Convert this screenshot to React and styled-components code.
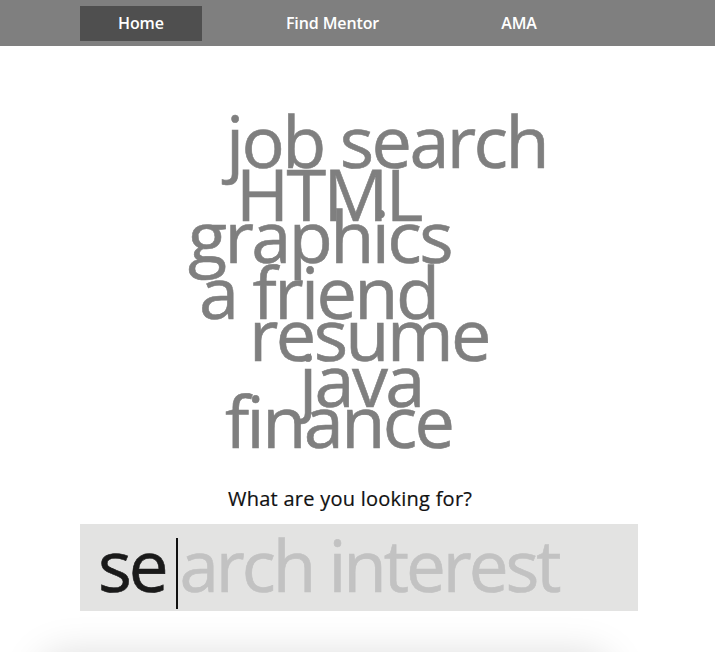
import styled, { createGlobalStyle } from "styled-components";

const NAV_ITEMS = ["Home", "Find Mentor", "AMA"];

// each word: left origin (px) and distance from the previous baseline (px)
const WORDS = [
  { text: "job search", left: 226, gap: 0 },
  { text: "HTML", left: 236, gap: 53 },
  { text: "graphics", left: 188, gap: 42 },
  { text: "a friend", left: 199, gap: 56 },
  { text: "resume", left: 249, gap: 42 },
  { text: "java", left: 299, gap: 46 },
  { text: "finance", left: 225, gap: 41 },
];

const GlobalStyle = createGlobalStyle`
  html, body {
    margin: 0;
    padding: 0;
    overflow: hidden;
    background: #ffffff;
  }
  body {
    font-family: "Open Sans", "Noto Sans", sans-serif;
  }
`;

const App = () => {
  return (
    <>
      <GlobalStyle />
      <NavBar>
        {NAV_ITEMS.map((item, i) => (
          <NavItem key={item} $active={i === 0}>
            {item}
          </NavItem>
        ))}
      </NavBar>
      <Cloud>
        {WORDS.map((w) => (
          <Word key={w.text} $left={w.left} $gap={w.gap}>
            {w.text}
          </Word>
        ))}
      </Cloud>
      <Question>What are you looking for?</Question>
      <SearchBox>
        <Typed>se</Typed>
        <Caret />
        <Ghost>arch interest</Ghost>
      </SearchBox>
      <Footer />
    </>
  );
};

const NavBar = styled.nav`
  display: flex;
  align-items: center;
  gap: 46px;
  height: 46px;
  padding-left: 80px;
  background-color: #7f7f7f;
`;

const NavItem = styled.a`
  display: flex;
  align-items: center;
  justify-content: center;
  height: 35px;
  padding: 0 38px;
  background-color: ${(p) => (p.$active ? "#4f4f4f" : "transparent")};
  color: #ffffff;
  font-size: 16px;
  font-weight: 600;
  letter-spacing: -0.1px;
  cursor: pointer;
`;

const Cloud = styled.div`
  padding-top: 94px;
  padding-bottom: 67px;
`;

const Word = styled.div`
  height: 0;
  line-height: 0;
  margin-top: ${(p) => p.$gap}px;
  margin-left: ${(p) => p.$left}px;
  font-size: 72px;
  letter-spacing: -2.6px;
  color: #7f7f7f;
  -webkit-text-stroke: 0.6px #7f7f7f;
  white-space: nowrap;
`;

const Question = styled.div`
  padding-left: 228px;
  font-size: 20px;
  line-height: 24px;
  letter-spacing: 0.25px;
  color: #111111;
  -webkit-text-stroke: 0.2px #111111;
`;

const SearchBox = styled.div`
  margin: 13px 0 0 80px;
  width: 558px;
  height: 87px;
  padding-left: 18px;
  box-sizing: border-box;
  background-color: #e3e3e2;
  font-size: 71px;
  line-height: 87px;
  letter-spacing: -3.1px;
  white-space: nowrap;
`;

const Typed = styled.span`
  display: inline-block;
  transform: translateY(-3px);
  color: #1a1a1a;
  -webkit-text-stroke: 0.6px #1a1a1a;
`;

const Caret = styled.span`
  display: inline-block;
  width: 2px;
  height: 71px;
  margin: 0 2px 0 10px;
  vertical-align: -14px;
  background-color: #111111;
`;

const Ghost = styled.span`
  display: inline-block;
  transform: translateY(-3px);
  color: #c2c2c2;
  -webkit-text-stroke: 0.6px #c2c2c2;
`;

const Footer = styled.div`
  margin: 44px 0 0 40px;
  width: 570px;
  height: 120px;
  border-radius: 24px;
  background-color: #ffffff;
  box-shadow: 0 0 40px rgba(0, 0, 0, 0.15);
`;

export default App;
